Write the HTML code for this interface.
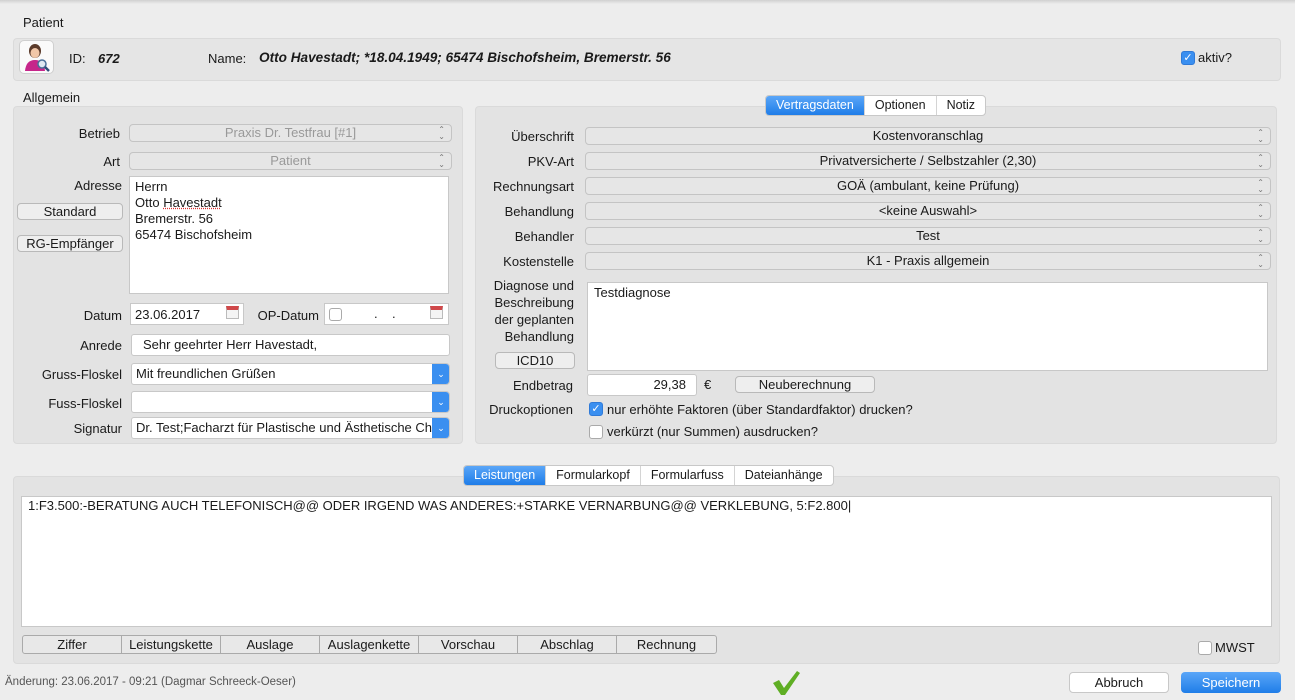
<!DOCTYPE html>
<html><head><meta charset="utf-8"><style>
*{box-sizing:border-box;margin:0;padding:0}
body{width:1295px;height:700px;background:#ededed;font-family:"Liberation Sans",sans-serif;font-size:13px;color:#1a1a1a;position:relative;overflow:hidden}
.a{position:absolute}
.panel{position:absolute;background:#e3e3e3;border:1px solid #dadada;border-radius:4px}
.lbl{position:absolute;text-align:right;font-size:13px}
.pop{position:absolute;height:18px;border:1px solid #c4c4c4;border-radius:4px;background:#e6e6e6;text-align:center;line-height:16px;font-size:13px}
.pop:after{content:"⌃\A⌄";white-space:pre;position:absolute;right:6px;top:1px;font-size:8px;line-height:7px;color:#777}
.dis{color:#999}
.tf{position:absolute;background:#fff;border:1px solid #c8c8c8;font-size:13px;line-height:18px;padding-left:4px}
.btn{position:absolute;height:17px;border:1px solid #b9b9b9;border-radius:4px;background:#eee;text-align:center;line-height:15px;font-size:13px}
.combo{position:absolute;background:#fff;border:1px solid #c8c8c8;height:22px;line-height:20px;padding-left:4px;font-size:13px;border-radius:3px 4px 4px 3px;overflow:hidden;white-space:nowrap}
.combo b{position:absolute;right:-1px;top:-1px;width:18px;height:22px;background:#3a8ff0;border-radius:0 4px 4px 0;color:#fff;font-size:9px;text-align:center;line-height:22px;font-weight:normal}
.cb{position:absolute;width:14px;height:14px;border:1px solid #aaa;border-radius:3px;background:#fff}
.cb.on{background:#3a8ff0;border-color:#2f7ad8;color:#fff;font-size:11px;line-height:12px;text-align:center}
.seg{position:absolute;display:flex;height:21px;border:1px solid #c8c8c8;border-radius:4px;background:#fff;overflow:hidden;font-size:12.5px}
.seg div{padding:0 10px;line-height:19px;border-right:1px solid #d4d4d4}
.seg div:last-child{border-right:none}
.seg .s{background:linear-gradient(#5aa6f8,#1f7de8);color:#fff}
.bb{display:flex;position:absolute;left:22px;top:635px;height:19px;border:1px solid #aaa;border-radius:3px;background:#e8e8e8;font-size:13px}
.bb div{width:99px;text-align:center;line-height:17px;border-right:1px solid #aaa}
.bb div:last-child{border-right:none}
</style></head><body>
<div class="a" style="left:0;top:0;width:1295px;height:4px;background:linear-gradient(#d0d0d0,#ededed)"></div>
<div class="a" style="left:23px;top:15px">Patient</div>
<div class="panel" style="left:13px;top:38px;width:1268px;height:43px;background:#e5e5e5"></div>
<div class="a" style="left:19px;top:40px;width:35px;height:34px;background:#fafafa;border:1px solid #cfcfcf;border-radius:5px">
<svg width="33" height="32" viewBox="0 0 33 32"><ellipse cx="15" cy="10" rx="6" ry="7" fill="#5a3a2a"/><ellipse cx="15" cy="12" rx="4.5" ry="5" fill="#f1c7a8"/><path d="M5 30 Q6 19 15 19 Q24 19 25 30Z" fill="#c6268a"/><circle cx="22" cy="23" r="4" fill="#dfe9f2" stroke="#4a6f99" stroke-width="1.5"/><path d="M25 26 L29 30" stroke="#2d4d7a" stroke-width="2.5"/></svg></div>
<div class="a" style="left:69px;top:51px">ID:</div>
<div class="a" style="left:98px;top:51px;font-weight:bold;font-style:italic">672</div>
<div class="a" style="left:208px;top:51px">Name:</div>
<div class="a" style="left:259px;top:50px;font-weight:bold;font-style:italic;font-size:13.6px">Otto Havestadt; *18.04.1949; 65474 Bischofsheim, Bremerstr. 56</div>
<div class="cb on" style="left:1181px;top:51px">✓</div>
<div class="a" style="left:1198px;top:50px">aktiv?</div>

<div class="a" style="left:23px;top:90px">Allgemein</div>
<div class="panel" style="left:13px;top:106px;width:450px;height:338px"></div>
<div class="lbl" style="left:40px;width:80px;top:126px">Betrieb</div>
<div class="pop dis" style="left:129px;top:124px;width:323px">Praxis Dr. Testfrau [#1]</div>
<div class="lbl" style="left:40px;width:80px;top:154px">Art</div>
<div class="pop dis" style="left:129px;top:152px;width:323px">Patient</div>
<div class="lbl" style="left:40px;width:82px;top:178px">Adresse</div>
<div class="tf" style="left:129px;top:176px;width:320px;height:118px;line-height:16px;padding-left:5px;padding-top:2px">Herrn<br>Otto <span style="text-decoration:underline dotted #d33">Havestadt</span><br>Bremerstr. 56<br>65474 Bischofsheim</div>
<div class="btn" style="left:17px;top:203px;width:106px">Standard</div>
<div class="btn" style="left:17px;top:235px;width:106px">RG-Empfänger</div>
<div class="lbl" style="left:40px;width:82px;top:308px">Datum</div>
<div class="tf" style="left:130px;top:303px;width:114px;height:22px;line-height:21px">23.06.2017</div>
<div class="a" style="left:226px;top:306px;width:13px;height:13px;background:#f4f4f4;border:1px solid #bbb;border-top:4px solid #d0484a"></div>
<div class="lbl" style="left:250px;width:69px;top:308px">OP-Datum</div>
<div class="tf" style="left:324px;top:303px;width:125px;height:22px;line-height:20px"><span style="margin-left:45px">.&nbsp;&nbsp;&nbsp;&nbsp;.</span></div>
<div class="cb" style="left:329px;top:308px;width:13px;height:13px"></div>
<div class="a" style="left:430px;top:306px;width:13px;height:13px;background:#f4f4f4;border:1px solid #bbb;border-top:4px solid #d0484a"></div>
<div class="lbl" style="left:40px;width:82px;top:338px">Anrede</div>
<div class="tf" style="left:131px;top:334px;width:319px;height:22px;line-height:20px;padding-left:11px;border-radius:3px">Sehr geehrter Herr Havestadt,</div>
<div class="lbl" style="left:20px;width:102px;top:367px">Gruss-Floskel</div>
<div class="combo" style="left:131px;top:363px;width:319px">Mit freundlichen Grüßen<b>⌄</b></div>
<div class="lbl" style="left:20px;width:102px;top:396px">Fuss-Floskel</div>
<div class="combo" style="left:131px;top:391px;width:319px"><b>⌄</b></div>
<div class="lbl" style="left:20px;width:102px;top:421px">Signatur</div>
<div class="combo" style="left:131px;top:417px;width:319px">Dr. Test;Facharzt für Plastische und Ästhetische Chirurgie<b>⌄</b></div>

<div class="panel" style="left:475px;top:106px;width:802px;height:338px"></div>
<div class="seg" style="left:765px;top:95px"><div class="s">Vertragsdaten</div><div>Optionen</div><div>Notiz</div></div>
<div class="lbl" style="left:480px;width:94px;top:129px">Überschrift</div>
<div class="pop" style="left:585px;top:127px;width:686px">Kostenvoranschlag</div>
<div class="lbl" style="left:480px;width:94px;top:154px">PKV-Art</div>
<div class="pop" style="left:585px;top:152px;width:686px">Privatversicherte / Selbstzahler (2,30)</div>
<div class="lbl" style="left:470px;width:104px;top:179px">Rechnungsart</div>
<div class="pop" style="left:585px;top:177px;width:686px">GOÄ (ambulant, keine Prüfung)</div>
<div class="lbl" style="left:480px;width:94px;top:204px">Behandlung</div>
<div class="pop" style="left:585px;top:202px;width:686px">&lt;keine Auswahl&gt;</div>
<div class="lbl" style="left:480px;width:94px;top:229px">Behandler</div>
<div class="pop" style="left:585px;top:227px;width:686px">Test</div>
<div class="lbl" style="left:480px;width:94px;top:254px">Kostenstelle</div>
<div class="pop" style="left:585px;top:252px;width:686px">K1 - Praxis allgemein</div>
<div class="lbl" style="left:476px;width:98px;top:277px;line-height:17px;text-align:right">Diagnose und<br>Beschreibung<br>der geplanten<br>Behandlung</div>
<div class="tf" style="left:587px;top:282px;width:681px;height:89px;padding:1px 6px">Testdiagnose</div>
<div class="btn" style="left:495px;top:352px;width:80px">ICD10</div>
<div class="lbl" style="left:480px;width:93px;top:378px">Endbetrag</div>
<div class="tf" style="left:587px;top:374px;width:110px;height:22px;line-height:20px;text-align:right;padding-right:10px;border-radius:3px">29,38</div>
<div class="a" style="left:704px;top:377px">€</div>
<div class="btn" style="left:735px;top:376px;width:140px">Neuberechnung</div>
<div class="lbl" style="left:470px;width:103px;top:402px">Druckoptionen</div>
<div class="cb on" style="left:589px;top:402px">✓</div>
<div class="a" style="left:607px;top:402px">nur erhöhte Faktoren (über Standardfaktor) drucken?</div>
<div class="cb" style="left:589px;top:425px"></div>
<div class="a" style="left:607px;top:424px">verkürzt (nur Summen) ausdrucken?</div>

<div class="panel" style="left:13px;top:476px;width:1267px;height:188px"></div>
<div class="seg" style="left:463px;top:465px"><div class="s">Leistungen</div><div>Formularkopf</div><div>Formularfuss</div><div>Dateianhänge</div></div>
<div class="tf" style="left:21px;top:496px;width:1251px;height:131px;padding:0 6px">1:F3.500:-BERATUNG AUCH TELEFONISCH@@ ODER IRGEND WAS ANDERES:+STARKE VERNARBUNG@@ VERKLEBUNG, 5:F2.800|</div>
<div class="bb"><div>Ziffer</div><div>Leistungskette</div><div>Auslage</div><div>Auslagenkette</div><div>Vorschau</div><div>Abschlag</div><div>Rechnung</div></div>
<div class="cb" style="left:1198px;top:641px"></div>
<div class="a" style="left:1215px;top:640px">MWST</div>
<div class="a" style="left:5px;top:676px;font-size:11.5px;color:#555">Änderung: 23.06.2017 - 09:21 (Dagmar Schreeck-Oeser)</div>
<svg class="a" style="left:771px;top:669px" width="30" height="27" viewBox="0 0 30 27"><path d="M2 14 L8 11 L13 19 L26 2 L29 4 L14 26 L10 26Z" fill="#5fae24"/></svg>
<div class="a" style="left:1069px;top:672px;width:100px;height:21px;background:#fff;border:1px solid #c8c8c8;border-radius:4px;text-align:center;line-height:19px">Abbruch</div>
<div class="a" style="left:1181px;top:672px;width:100px;height:21px;background:linear-gradient(#5aa6f8,#1f7de8);border-radius:4px;color:#fff;text-align:center;line-height:21px">Speichern</div>
</body></html>
